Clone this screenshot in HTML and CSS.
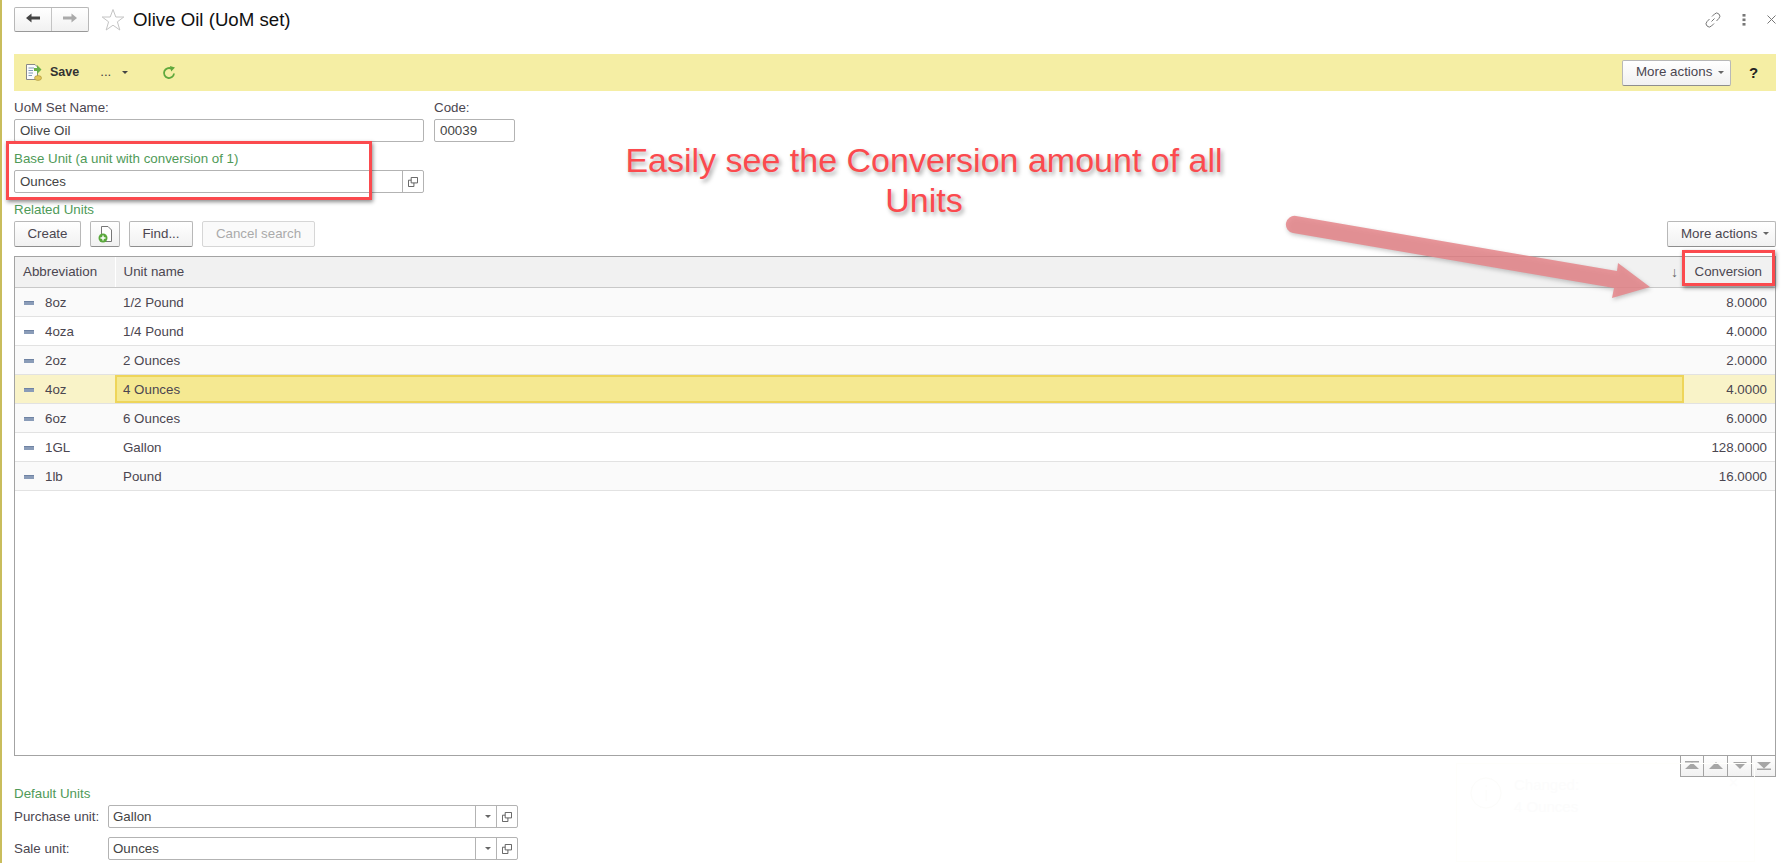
FILE: index.html
```html
<!DOCTYPE html>
<html>
<head>
    <title>Olive Oil (UoM set)</title>
    <link rel="stylesheet" href="styles.css">
</head>
<body>
    <div class="page">
        <!-- Header -->
        <div class="header">
            <div class="nav-group">
                <button class="nav-btn">
                    <svg width="14" height="12" viewBox="0 0 14 12"><path d="M0 6 5.5 1.5V4.5H14V7.5H5.5V10.5Z" fill="#444"/></svg>
                </button>
                <button class="nav-btn">
                    <svg width="14" height="12" viewBox="0 0 14 12"><path d="M14 6 8.5 1.5V4.5H0V7.5H8.5V10.5Z" fill="#aaa"/></svg>
                </button>
            </div>
            <svg class="star" width="24" height="24" viewBox="0 0 24 24"><path d="M12 1.5 14.8 9H22.8L16.4 13.8 18.8 22 12 17.2 5.2 22 7.6 13.8 1.2 9H9.2Z" fill="none" stroke="#c4c4c4"/></svg>
            <h1 class="title">Olive Oil (UoM set)</h1>
            <div class="header-icons">
                <svg width="16" height="16" viewBox="0 0 16 16" fill="none" stroke="#777" stroke-width="1"><path d="M6.5 9.5 9.5 6.5M7 4.5 9.5 2a2.6 2.6 0 0 1 4.4 4.4L11.5 9M9 11.5 6.5 14A2.6 2.6 0 0 1 2 9.6L4.5 7"/></svg>
                <svg width="4" height="12" viewBox="0 0 4 12"><g fill="#777"><rect x="0.5" y="0" width="3" height="2.6"/><rect x="0.5" y="4.5" width="3" height="2.6"/><rect x="0.5" y="9" width="3" height="2.6"/></g></svg>
                <svg width="9" height="9" viewBox="0 0 9 9"><path d="M.5.5 8.5 8.5M8.5.5.5 8.5" stroke="#777"/></svg>
            </div>
        </div>

        <!-- Command bar -->
        <div class="toolbar">
            <svg class="save-icon" width="16" height="17" viewBox="0 0 16 17">
                <path d="M.5.5H9L11.5 3V15.5H.5Z" fill="#fbfbfb" stroke="#888"/>
                <path d="M2.5 4H8M2.5 6.5H7M2.5 9H7M2.5 11.5H6" stroke="#7f9ab5"/>
                <path d="M8 4H11V1L15.5 5.5 11 10V7H8Z" fill="#6ab04a"/>
                <ellipse cx="12" cy="14" rx="3.5" ry="2.4" fill="#e3c85a" stroke="#a58e36" stroke-width=".6"/>
            </svg>
            <span class="save-label">Save</span>
            <span class="dots">...</span>
            <span class="caret caret-dark"></span>
            <svg class="refresh" width="14" height="14" viewBox="0 0 14 14" fill="none"><path d="M12 7.5A5 5 0 1 1 9.5 2.7" stroke="#5fa83c" stroke-width="1.8"/><path d="M8 0 13 1.5 9.2 5.5Z" fill="#5fa83c"/></svg>
            <div class="toolbar-right">
                <button class="btn btn-more">More actions <span class="caret"></span></button>
                <span class="help">?</span>
            </div>
        </div>

        <!-- Form -->
        <div class="form-row">
            <div class="form-group group-name">
                <label>UoM Set Name:</label>
                <div class="input">Olive Oil</div>
            </div>
            <div class="form-group group-code">
                <label>Code:</label>
                <div class="input">00039</div>
            </div>
        </div>
        <div class="form-group group-name">
            <label class="green">Base Unit (a unit with conversion of 1)</label>
            <div class="input has-btn">
                <span class="input-text">Ounces</span>
                <span class="input-btn"><svg width="10" height="10" viewBox="0 0 11 11" fill="none" stroke="#555"><path d="M3.5 .5H10.5V6.5H3.5Z"/><path d="M3.5 3.5H.5V10.5H6.5V6.5"/></svg></span>
            </div>
        </div>

        <!-- Related units -->
        <div class="section-title green">Related Units</div>
        <div class="grid-bar">
            <button class="btn btn-create">Create</button>
            <button class="btn btn-add">
                <svg width="15" height="17" viewBox="0 0 15 17"><path d="M3.5.5H10L13.5 4V15.5H3.5Z" fill="#fff" stroke="#777"/><circle cx="5" cy="12" r="4.5" fill="#5aa83c"/><path d="M5 9.5V14.5M2.5 12H7.5" stroke="#fff" stroke-width="1.4"/></svg>
            </button>
            <button class="btn btn-find">Find...</button>
            <button class="btn btn-cancel" disabled>Cancel search</button>
            <button class="btn btn-more btn-right">More actions <span class="caret"></span></button>
        </div>

        <div class="grid">
            <table>
                <thead>
                    <tr>
                        <th class="col-abbr">Abbreviation</th>
                        <th class="col-name">Unit name<span class="sort">↓</span></th>
                        <th class="col-conv">Conversion</th>
                    </tr>
                </thead>
                <tbody>
                    <tr><td><i class="dash"></i>8oz</td><td>1/2 Pound</td><td class="num">8.0000</td></tr>
                    <tr><td><i class="dash"></i>4oza</td><td>1/4 Pound</td><td class="num">4.0000</td></tr>
                    <tr><td><i class="dash"></i>2oz</td><td>2 Ounces</td><td class="num">2.0000</td></tr>
                    <tr class="selected"><td><i class="dash"></i>4oz</td><td class="current">4 Ounces</td><td class="num">4.0000</td></tr>
                    <tr><td><i class="dash"></i>6oz</td><td>6 Ounces</td><td class="num">6.0000</td></tr>
                    <tr><td><i class="dash"></i>1GL</td><td>Gallon</td><td class="num">128.0000</td></tr>
                    <tr><td><i class="dash"></i>1lb</td><td>Pound</td><td class="num">16.0000</td></tr>
                </tbody>
            </table>
        </div>
        <div class="grid-nav">
            <button class="move"><svg width="16" height="10" viewBox="0 0 16 10"><path d="M1 0H15V1.5H1ZM8 1.5 15 8H1Z" fill="#a6a6a6"/></svg></button>
            <button class="move"><svg width="16" height="10" viewBox="0 0 16 10"><path d="M8 1 15 8H1Z" fill="#a6a6a6"/></svg></button>
            <button class="move"><svg width="16" height="10" viewBox="0 0 16 10"><path d="M1 1H15L8 8Z" fill="#a6a6a6"/></svg></button>
            <button class="move"><svg width="16" height="10" viewBox="0 0 16 10"><path d="M1 1H15L8 7.5ZM1 7.5H15V9H1Z" fill="#a6a6a6"/></svg></button>
        </div>

        <!-- Default units -->
        <div class="section-title green defaults">Default Units</div>
        <div class="unit-row">
            <label>Purchase unit:</label>
            <div class="input has-btn unit-input">
                <span class="input-text">Gallon</span>
                <span class="input-btn"><span class="caret"></span></span>
                <span class="input-btn"><svg width="10" height="10" viewBox="0 0 11 11" fill="none" stroke="#555"><path d="M3.5 .5H10.5V6.5H3.5Z"/><path d="M3.5 3.5H.5V10.5H6.5V6.5"/></svg></span>
            </div>
        </div>
        <div class="unit-row">
            <label>Sale unit:</label>
            <div class="input has-btn unit-input">
                <span class="input-text">Ounces</span>
                <span class="input-btn"><span class="caret"></span></span>
                <span class="input-btn"><svg width="10" height="10" viewBox="0 0 11 11" fill="none" stroke="#555"><path d="M3.5 .5H10.5V6.5H3.5Z"/><path d="M3.5 3.5H.5V10.5H6.5V6.5"/></svg></span>
            </div>
        </div>
    </div>

    <!-- Fading notification -->
    <div class="toast">
        <svg class="toast-icon" width="32" height="32" viewBox="0 0 32 32" fill="none" stroke="#fcfcfa"><circle cx="16" cy="16" r="15"/><path d="M16 13V24M16 8V10"/></svg>
        <div class="toast-title">Changed:</div>
        <div class="toast-text">4 Ounces</div>
        <span class="toast-close">×</span>
    </div>

    <!-- Screenshot annotations -->
    <div class="note">Easily see the Conversion amount of all<br>Units</div>
    <div class="mark mark-base"></div>
    <div class="mark mark-conv"></div>
    <svg class="arrow" width="1785" height="863" viewBox="0 0 1785 863">
        <path d="M1296 216 1617 271 1618 263 1650 287 1612 298 1614 288 1293 233A8.5 8.5 0 0 1 1296 216Z" fill="#e58589" fill-opacity=".85"/>
    </svg>
</body>
</html>
```

FILE: styles.css
```css
* { box-sizing: border-box; }
html, body { height: 100%; }
body { margin: 0; background: #fff; font-family: "Liberation Sans", Arial, sans-serif; font-size: 13.33px; color: #4b4650; overflow: hidden; }
button { font: inherit; color: inherit; }
label { display: block; line-height: 16px; }
.page { height: 863px; padding: 7px 9px 0 12px; border-left: 2px solid #c9bd5c; }
.green { color: #4f9a58; }

/* header */
.header { display: flex; align-items: center; height: 25px; margin-bottom: 22px; }
.nav-group { display: flex; width: 75px; height: 25px; border: 1px solid #b8b8b8; border-bottom-color: #999; border-radius: 2px; background: linear-gradient(#fff, #f1f1f1); }
.nav-btn { flex: 1; padding: 0; border: none; background: none; }
.nav-btn + .nav-btn { border-left: 1px solid #c4c4c4; }
.star { margin: 0 8px 0 12px; }
.title { margin: 0; font-size: 18.67px; font-weight: normal; color: #111; }
.header-icons { display: flex; align-items: center; gap: 21px; margin-left: auto; margin-right: 0; }

/* command bar */
.toolbar { display: flex; align-items: center; height: 37px; padding-left: 12px; background: #f5eea4; }
.save-label { margin-left: 8px; padding-bottom: 2px; font-weight: bold; font-size: 12.5px; color: #333; }
.dots { margin-left: 21px; padding-bottom: 2px; color: #444; }
.caret { display: inline-block; width: 0; height: 0; border: 3px solid transparent; border-top: 3px solid #666; border-bottom: none; vertical-align: middle; margin-left: 4px; }
.caret-dark { margin-left: 11px; border-top-color: #444; }
.refresh { margin-left: 34px; }
.toolbar-right { display: flex; align-items: center; margin-left: auto; }
.help { width: 45px; padding-left: 18px; font-size: 15px; font-weight: bold; color: #222; }

.btn { height: 26px; padding: 0 0 2px; border: 1px solid #b8b8b8; border-bottom-color: #8e8e8e; border-radius: 2px; background: linear-gradient(#fff, #f1f1f1); }
.btn-more { width: 109px; padding-left: 13px; text-align: left; }
.btn-more .caret { margin-left: 2px; }
.btn-create { width: 67px; }
.btn-add { width: 30px; display: flex; align-items: center; justify-content: center; padding: 0; }
.btn-find { width: 64px; }
.btn-cancel { width: 113px; color: #aaa; border-color: #d6d6d6; background: #fafafa; }
.btn-right { margin-left: auto; }

/* form */
.form-row { display: flex; gap: 10px; margin-top: 8px; }
.form-group { margin-bottom: 8px; }
.group-name { width: 410px; }
.group-code { width: 81px; }
.form-group label { padding-top: 1px; margin-bottom: 3px; line-height: 16px; }
.input { display: flex; align-items: center; height: 23px; padding-left: 5px; border: 1px solid #b3b3b3; border-radius: 2px; background: #fff; color: #444; }
.has-btn { padding-left: 0; }
.input-text { flex: 1; padding-left: 5px; }
.input-btn { display: flex; align-items: center; justify-content: center; width: 21px; height: 100%; border-left: 1px solid #b3b3b3; }
.section-title { padding-top: 1px; line-height: 16px; }
.grid-bar { display: flex; gap: 9px; margin-top: 3px; }

/* grid */
.grid { height: 500px; margin-top: 9px; border: 1px solid #a3a3a3; }
table { width: 100%; border-collapse: collapse; table-layout: fixed; }
th { height: 30px; padding: 0 8px; font-weight: normal; text-align: left; background: #f1f1f1; border-bottom: 1px solid #c8c8c8; }
.col-abbr { width: 100px; border-right: 1px solid #fff; }
.col-conv { width: 91px; text-align: right; padding-right: 13px; }
.sort { float: right; margin-right: -2px; color: #666; font-size: 14px; }
td { height: 29px; padding: 1px 8px 0; border-bottom: 1px solid #e2e2e2; background: #fff; }
tbody tr:nth-child(odd) td { background: #fafafa; }
tbody tr.selected td { background: #f9f3c8; }
tbody tr.selected td.current { background: #f5e992; box-shadow: inset 0 0 0 2px #eed55a; }
.num { text-align: right; }
.dash { display: inline-block; width: 10px; height: 4px; margin: 0 11px 0 1px; vertical-align: 2px; background: #8a9cb8; border-top: 1px solid #6f83a3; }

.grid-nav { display: flex; justify-content: flex-end; height: 21px; }
.move { display: flex; align-items: center; justify-content: center; width: 24px; height: 21px; padding: 0; border: 1px solid #a3a3a3; border-top: none; border-left-width: 1px; background: linear-gradient(#fff, #f1f1f1); }
.move + .move { border-left: none; }

.defaults { margin-top: 8px; }
.unit-row { display: flex; align-items: center; margin-top: 3px; margin-bottom: 9px; }
.unit-row label { width: 94px; }
.unit-input { width: 410px; }
.unit-input .input-text { padding-left: 4px; }

/* notification fading out, sits over the page */
.toast { position: absolute; left: 1456px; top: 763px; width: 299px; height: 99px; padding: 8px 0 0 57px; border: 1px solid #fefefb; font-size: 15px; color: #fcfcfc; }
.toast-icon { position: absolute; left: 13px; top: 13px; }
.toast-title { line-height: 26px; }
.toast-close { position: absolute; right: 16px; top: 10px; font-size: 16px; }

/* annotations */
.note { position: absolute; left: 624px; top: 140px; width: 600px; text-align: center; font-size: 34px; line-height: 40px; color: #fb4a4e; text-shadow: 2px 3px 4px rgba(0,0,0,.35); }
.mark { position: absolute; border: 3px solid #fb4a4e; box-shadow: 1px 2px 4px rgba(0,0,0,.45); }
.mark-base { left: 6px; top: 141px; width: 366px; height: 59px; }
.mark-conv { left: 1682px; top: 250px; width: 93px; height: 36px; }
.arrow { position: absolute; left: 0; top: 0; pointer-events: none; filter: drop-shadow(1px 2px 2px rgba(0,0,0,.25)); }
```
